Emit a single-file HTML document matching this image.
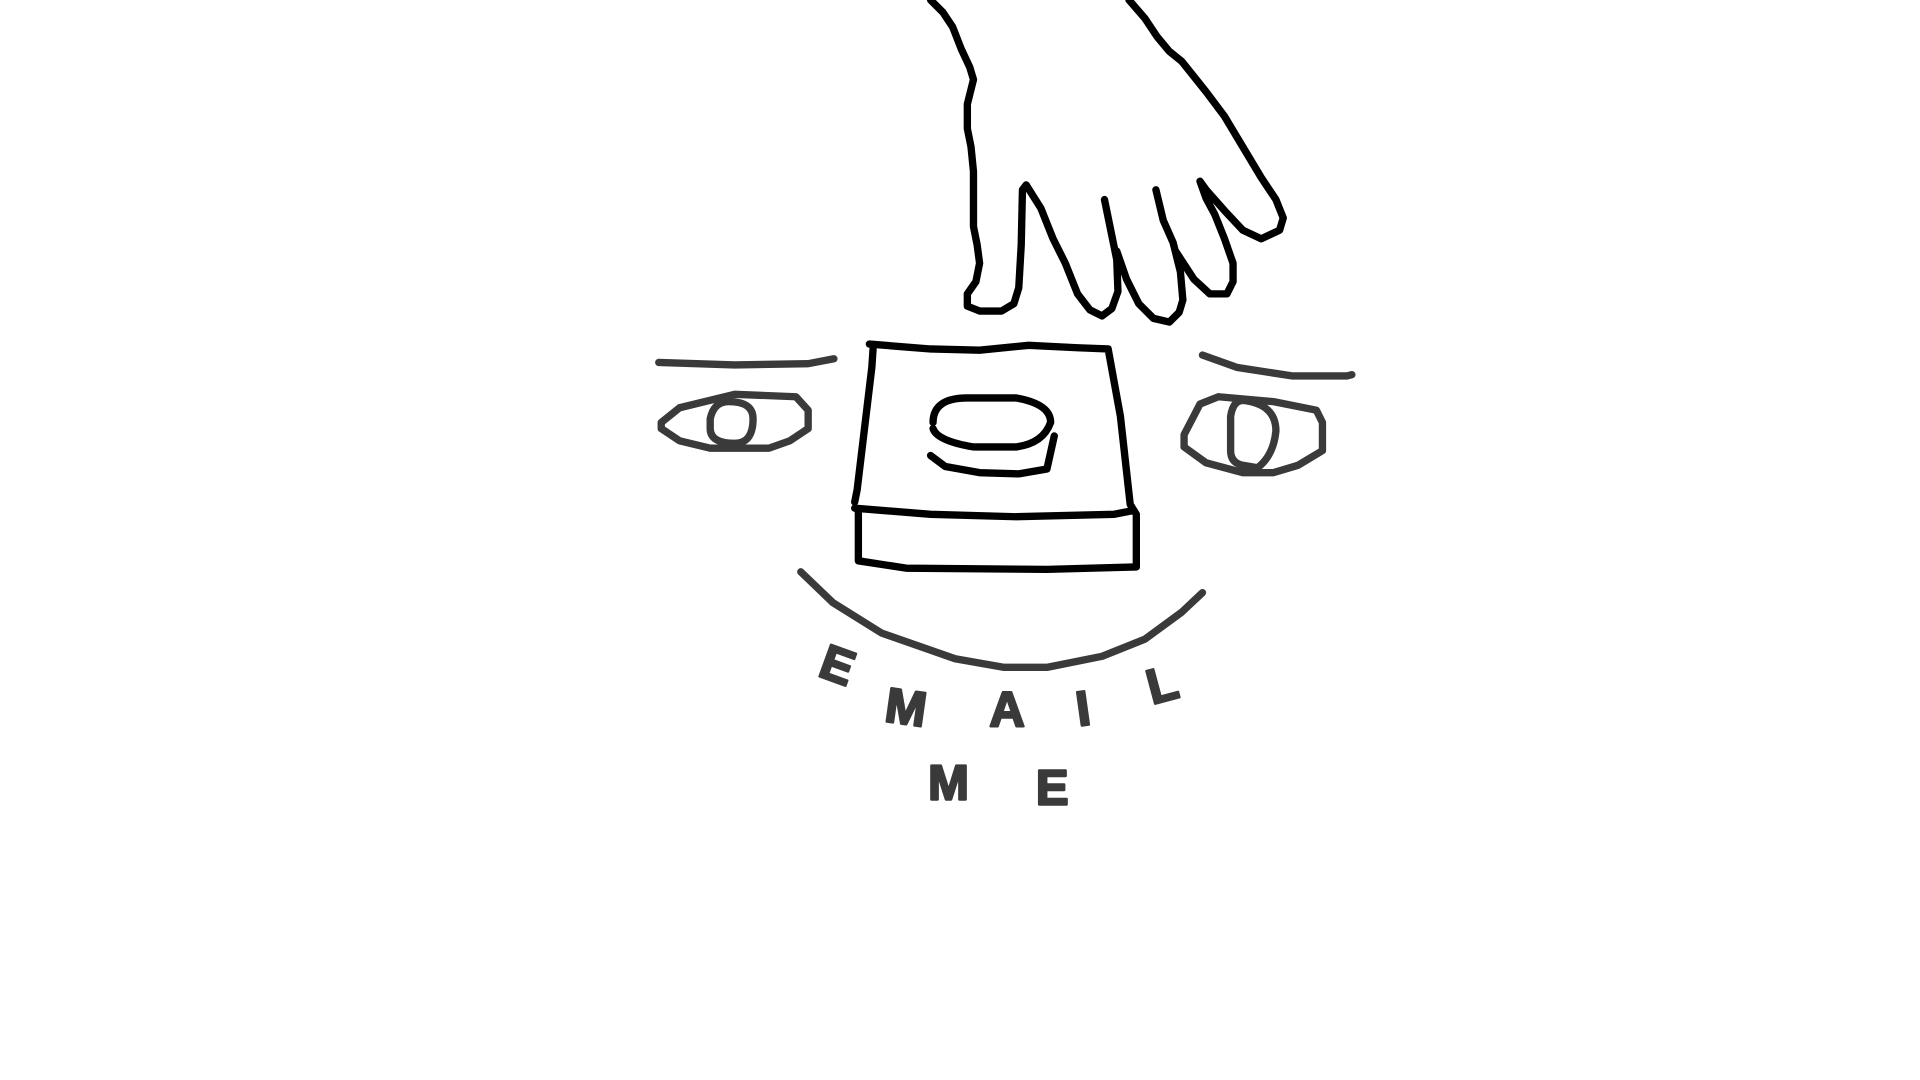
<!DOCTYPE html><html><head><meta charset="utf-8"><style>html,body{margin:0;padding:0;background:#fff;width:1920px;height:1080px;overflow:hidden}svg{display:block}</style></head><body>
<svg width="1920" height="1080" viewBox="0 0 1568 882" preserveAspectRatio="none">
<g fill="none" stroke="#000" stroke-width="6" stroke-linejoin="round" stroke-linecap="round">
<path d="M760,0 L770,10 L778,22 L785,40 L792,55 L795,65 L790,85 L790,105 L793,120 L795,140 L795,185 L798,200 L800,215 L797,230 L790,240 L790,250 L800,254 L818,254 L828,248 L832,235 L834,200 L835,155 L838,151 L850,170 L860,195 L870,215 L880,240 L890,253 L900,258 L908,252 L913,238 L912,212 L902,163"/>
<path d="M912,205 L920,228 L930,248 L942,260 L955,263 L963,255 L966,245 L964,222 L958,198 L950,180 L944,155"/>
<path d="M960,205 L975,228 L988,240 L1002,240 L1007,230 L1007,215 L1000,195 L992,175 L985,162 L980,148 L985,155 L1000,172 L1015,188 L1030,195 L1045,188 L1048,178 L1042,163 L1030,145 L1015,120 L1000,95 L985,75 L965,50 L955,42 L945,30 L935,15 L922,0"/>
<path d="M710,281 L760,285 L800,286 L840,282 L880,284 L905,285 L915,340 L920,385 L923,412 L928,420"/>
<path d="M713,285 L712,300 L706,350 L700,400 L698,410"/>
<path d="M698,415 L760,420 L830,422 L910,420 L925,417"/>
<path d="M701,418 L701,458 L740,464 L855,465 L928,463 L928,422"/>
<path d="M762,345 Q762,325 790,325 L830,325 Q858,330 858,345 Q852,362 830,365 L795,365 Q765,360 762,350"/>
<path d="M760,372 L772,381 L800,386 L832,387 L855,383 L861,356"/>
</g>
<g fill="none" stroke="#3a3a3a" stroke-width="6" stroke-linejoin="round" stroke-linecap="round">
<path d="M538,296 L600,298 L660,297 L681,293"/>
<path d="M982,290 L1010,300 L1055,307 L1100,307 L1104,306"/>
<path d="M540,345 L555,333 L600,322 L650,324 L660,335 L660,350 L645,360 L628,366 L580,366 L555,360 L540,350Z"/>
<path d="M595,328 Q615,328 615,342 Q615,362 600,362 Q580,362 580,350 L580,342 Q583,328 595,328Z"/>
<path d="M967,355 L980,330 L995,324 L1040,328 L1075,335 L1080,345 L1080,368 L1060,380 L1040,386 L1015,386 L985,378 L967,365Z"/>
<path d="M1015,327 Q1042,330 1042,352 Q1040,372 1027,382 L1015,380 Q1005,378 1005,368 L1005,340 Q1007,327 1015,327Z"/>
<path d="M654,467 L680,492 L720,517 L780,538 L820,545 L855,545 L900,536 L935,522 L965,500 L982,484"/>
</g>
<g fill="#3a3a3a" stroke="#3a3a3a" stroke-width="2" stroke-linejoin="round" font-family="Liberation Sans, sans-serif" font-size="40" font-weight="bold">
<text x="672" y="558" transform="rotate(20 688 540)">E</text>
<text x="724" y="592" transform="rotate(8 745 573)">M</text>
<text x="808" y="593">A</text>
<text x="878" y="592" transform="rotate(-8 886 572)">I</text>
<text x="936" y="571" transform="rotate(-15 955 555)">L</text>
<text x="758" y="653">M</text>
<text x="846" y="657">E</text>
</g>
</svg>
</body></html>
